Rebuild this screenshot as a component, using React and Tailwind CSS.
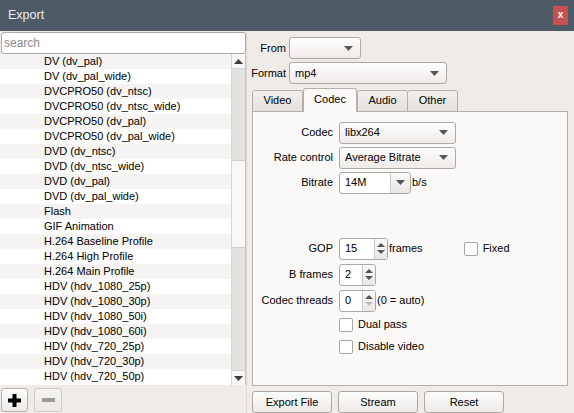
import React from "react";

const items = [
  "DV (dv_pal)",
  "DV (dv_pal_wide)",
  "DVCPRO50 (dv_ntsc)",
  "DVCPRO50 (dv_ntsc_wide)",
  "DVCPRO50 (dv_pal)",
  "DVCPRO50 (dv_pal_wide)",
  "DVD (dv_ntsc)",
  "DVD (dv_ntsc_wide)",
  "DVD (dv_pal)",
  "DVD (dv_pal_wide)",
  "Flash",
  "GIF Animation",
  "H.264 Baseline Profile",
  "H.264 High Profile",
  "H.264 Main Profile",
  "HDV (hdv_1080_25p)",
  "HDV (hdv_1080_30p)",
  "HDV (hdv_1080_50i)",
  "HDV (hdv_1080_60i)",
  "HDV (hdv_720_25p)",
  "HDV (hdv_720_30p)",
  "HDV (hdv_720_50p)",
];

function Tri({ up = false, color = "#575757", w = 9, h = 5 }) {
  return (
    <svg width={w} height={h} viewBox={`0 0 ${w} ${h}`} className="block">
      <path d={up ? `M0 ${h}H${w}L${w / 2} 0Z` : `M0 0H${w}L${w / 2} ${h}Z`} fill={color} />
    </svg>
  );
}

function Combo({ className, text }) {
  return (
    <div
      className={`${className} h-[22px] flex items-center justify-between rounded-[3px] border border-[#aca8a4] bg-gradient-to-b from-[#fefefe] to-[#eeebe8] pl-[5px] pr-[7px]`}
    >
      <span>{text}</span>
      <Tri />
    </div>
  );
}

function Spin({ className, value, downDisabled }) {
  return (
    <div className={`${className} h-[22px] flex rounded-[3px] border border-[#aca8a4] bg-white overflow-hidden`}>
      <div className="flex-1 pl-[5px] flex items-center">{value}</div>
      <div className="w-[13px] border-l border-[#cdc9c5] flex flex-col items-center justify-center gap-[3px] bg-gradient-to-b from-[#fafafa] to-[#e9e7e4]">
        <Tri up w={8} h={4} color="#555555" />
        <Tri w={8} h={4} color={downDisabled ? "#bdbdbd" : "#555555"} />
      </div>
    </div>
  );
}

function Check({ label }) {
  return (
    <div className="flex items-center">
      <div className="w-[14px] h-[14px] bg-white border border-[#aaa6a2] rounded-[2px]" />
      <span className="ml-[5px]">{label}</span>
    </div>
  );
}

function Button({ children }) {
  return (
    <div className="w-[80px] h-[22px] flex items-center justify-center rounded-[3px] border border-[#aca8a4] bg-gradient-to-b from-[#fdfdfd] to-[#eceae7]">
      {children}
    </div>
  );
}

function Row({ label, children, className = "" }) {
  return (
    <div className={`flex items-center ${className}`}>
      <div className="w-[80px] text-right">{label}</div>
      <div className="ml-[6px] flex items-center">{children}</div>
    </div>
  );
}

export default function App() {
  return (
    <div className="w-[574px] h-[413px] overflow-hidden flex flex-col bg-[#efebe7] text-[11px] leading-none text-[#000] font-['Liberation_Sans',Arial,sans-serif]">
      {/* title bar */}
      <div className="h-[31px] shrink-0 bg-[#4f5a67] flex items-center justify-between pl-[8px] pr-[6px]">
        <span className="text-[12.5px] text-[#e9ecef]">Export</span>
        <div className="w-[15px] h-[19px] bg-[#c75050] flex items-center justify-center text-white font-bold text-[10px] pb-[1px]">
          x
        </div>
      </div>

      <div className="flex flex-1 min-h-0">
        {/* left */}
        <div className="w-[246px] shrink-0 flex flex-col">
          <div className="mt-[1px] ml-[1px] w-[245px] h-[22px] bg-white border border-[#aca8a4] rounded-[3px] flex items-center pl-[2px] text-[#8a8a8a] text-[12px]">
            search
          </div>
          <div className="h-[331px] flex bg-white border-r border-[#c9c5c1]">
            <div className="flex-1 flex flex-col">
              {items.map((it, i) => (
                <div
                  key={it}
                  className={`h-[15px] shrink-0 flex items-center pl-[44px] ${i % 2 === 0 ? "bg-[#f5f4f2]" : "bg-white"}`}
                >
                  {it}
                </div>
              ))}
            </div>
            <div className="w-[14px] flex flex-col bg-[#e4e2df] border-l border-[#d8d5d2]">
              <div className="h-[15px] bg-[#f8f7f6] flex items-center justify-center border-b border-[#d8d5d2]">
                <Tri up w={9} h={5} color="#3c3c3c" />
              </div>
              <div className="h-[91px]" />
              <div className="h-[88px] bg-[#f9f8f7] border-y border-[#cfccc9]" />
              <div className="flex-1" />
              <div className="h-[15px] bg-[#f8f7f6] flex items-center justify-center border-t border-[#d8d5d2]">
                <Tri w={9} h={5} color="#3c3c3c" />
              </div>
            </div>
          </div>
          <div className="flex gap-[6px] pl-[1px] pt-[3px]">
            <div className="w-[27px] h-[24px] rounded-[3px] border border-[#b5b1ad] bg-gradient-to-b from-[#fdfdfd] to-[#eceae7] flex items-center justify-center">
              <svg width="13" height="13" viewBox="0 0 13 13">
                <path d="M4.5 0H8.5V4.5H13V8.5H8.5V13H4.5V8.5H0V4.5H4.5Z" fill="#000" />
              </svg>
            </div>
            <div className="w-[28px] h-[24px] rounded-[3px] border border-[#cfcbc7] bg-gradient-to-b from-[#f5f3f1] to-[#ebe8e5] flex items-center justify-center">
              <svg width="13" height="4" viewBox="0 0 13 4">
                <rect width="13" height="4" fill="#999999" />
              </svg>
            </div>
          </div>
        </div>

        {/* right */}
        <div className="flex-1 flex flex-col border-l border-[#dcd8d4] pl-[4px]">
          <div className="pt-[6px] flex flex-col gap-[3px]">
            <div className="flex items-center">
              <div className="w-[35px] text-right">From</div>
              <Combo className="ml-[3px] w-[72px]" text="" />
            </div>
            <div className="flex items-center">
              <div className="w-[35px] text-right">Format</div>
              <Combo className="ml-[3px] w-[158px]" text="mp4" />
            </div>
          </div>

          {/* tabs */}
          <div className="ml-[1px] mt-[3px] flex items-end h-[24px] relative z-10">
            <div className="w-[51px] h-[22px] -mb-px flex items-center justify-center border border-[#b3afab] rounded-t-[3px] bg-gradient-to-b from-[#f2f0ee] to-[#e3e0dd]">
              Video
            </div>
            <div className="w-[54px] h-[24px] -mb-px flex items-center justify-center border border-b-0 border-[#b3afab] rounded-t-[3px] bg-[#fbf9f7] pb-[1px]">
              Codec
            </div>
            <div className="w-[51px] h-[22px] -mb-px flex items-center justify-center border border-[#b3afab] rounded-t-[3px] bg-gradient-to-b from-[#f2f0ee] to-[#e3e0dd]">
              Audio
            </div>
            <div className="w-[51px] h-[22px] -mb-px -ml-px flex items-center justify-center border border-[#b3afab] rounded-t-[3px] bg-gradient-to-b from-[#f2f0ee] to-[#e3e0dd]">
              Other
            </div>
          </div>
          <div className="ml-[1px] w-[316px] h-[277px] border border-[#b3afab] bg-[#fbf9f7] pt-[10px] flex flex-col">
            <Row label="Codec">
              <Combo className="w-[117px]" text="libx264" />
            </Row>
            <Row label="Rate control" className="mt-[3px]">
              <Combo className="w-[117px]" text="Average Bitrate" />
            </Row>
            <Row label="Bitrate" className="mt-[3px]">
              <div className="w-[72px] h-[22px] flex rounded-[3px] border border-[#aca8a4] bg-white overflow-hidden">
                <div className="flex-1 pl-[5px] flex items-center">14M</div>
                <div className="w-[20px] border-l border-[#cdc9c5] flex items-center justify-center bg-gradient-to-b from-[#fafafa] to-[#e9e7e4]">
                  <Tri />
                </div>
              </div>
              <span className="ml-[1px]">b/s</span>
            </Row>
            <div className="h-[44px] shrink-0" />
            <div className="flex items-center">
              <Row label="GOP">
                <Spin className="w-[49px]" value="15" />
                <span className="ml-[1px]">frames</span>
              </Row>
              <div className="ml-[41px]">
                <Check label="Fixed" />
              </div>
            </div>
            <Row label="B frames" className="mt-[4px]">
              <Spin className="w-[37px]" value="2" />
            </Row>
            <Row label="Codec threads" className="mt-[4px]">
              <Spin className="w-[37px]" value="0" downDisabled />
              <span className="ml-[1px]">(0 = auto)</span>
            </Row>
            <div className="ml-[86px] mt-[6px]">
              <Check label="Dual pass" />
            </div>
            <div className="ml-[86px] mt-[8px]">
              <Check label="Disable video" />
            </div>
          </div>
          <div className="ml-[1px] mt-[5px] flex gap-[6px]">
            <Button>Export File</Button>
            <Button>Stream</Button>
            <Button>Reset</Button>
          </div>
        </div>
      </div>
    </div>
  );
}
